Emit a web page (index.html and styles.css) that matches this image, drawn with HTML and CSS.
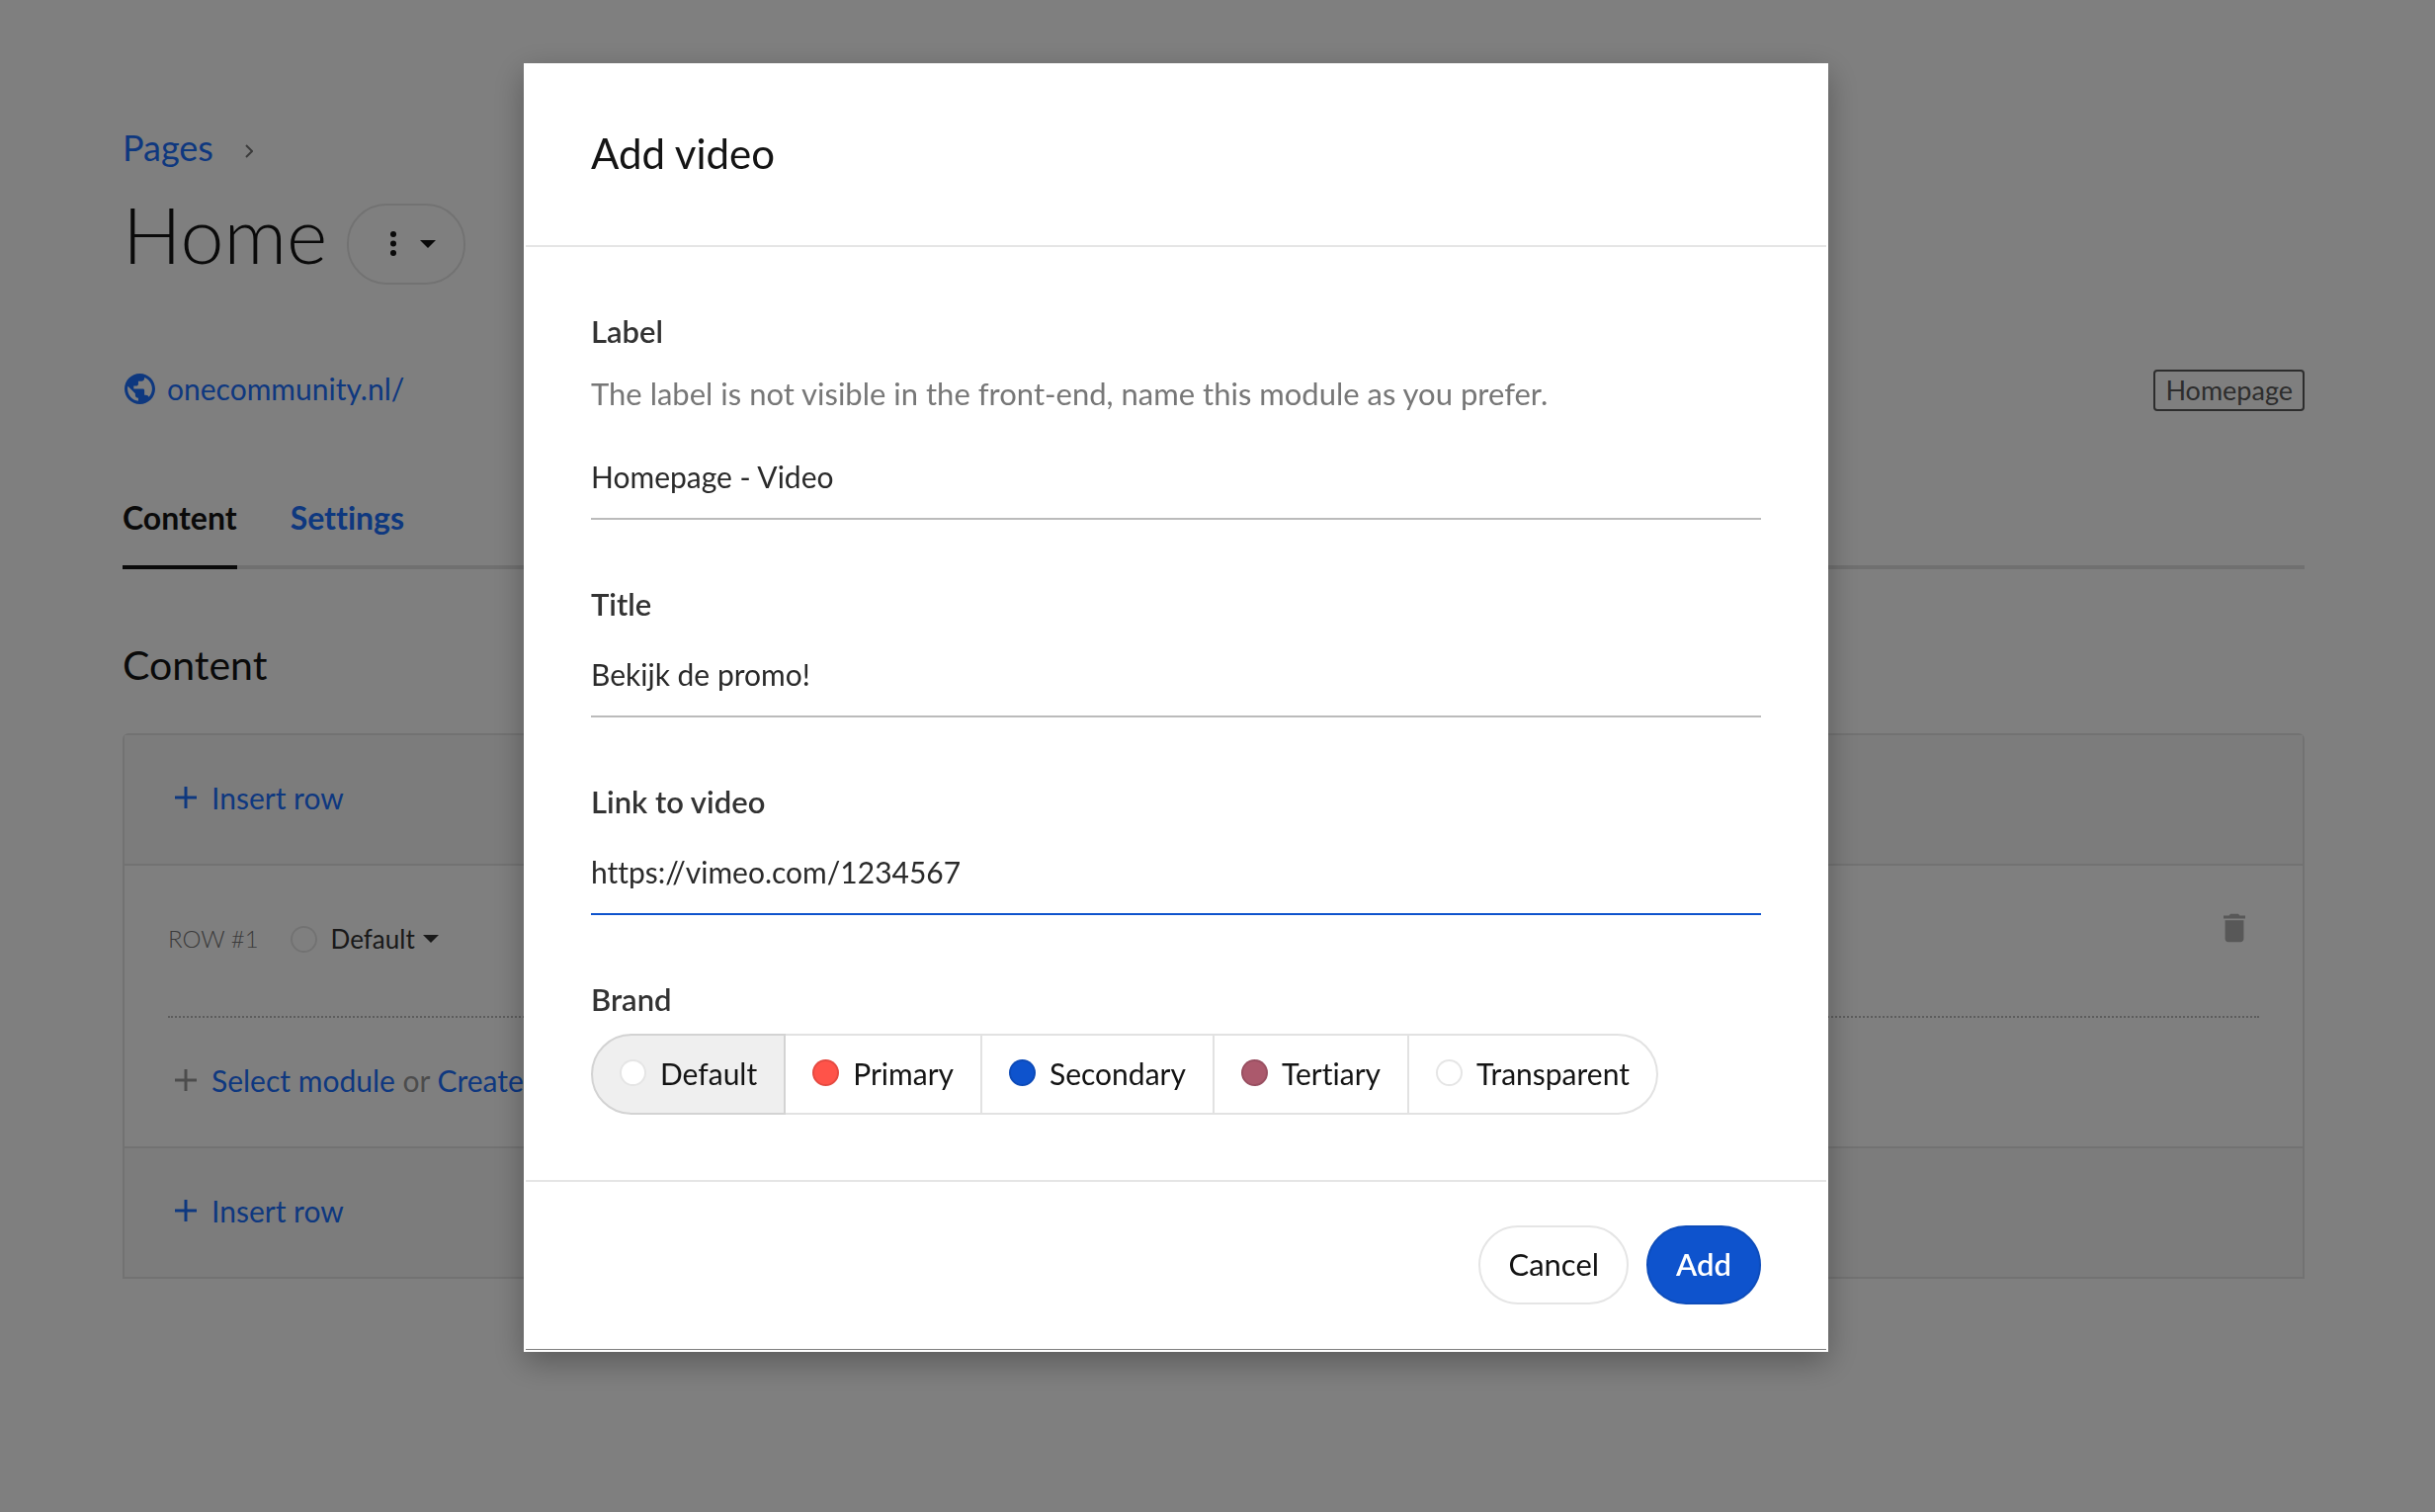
FILE: index.html
```html
<!DOCTYPE html>
<html lang="en">
  <head>
    <meta charset="UTF-8" />
    <meta name="viewport" content="width=device-width, initial-scale=1.0" />
    <title>Home - Add video</title>
    <link rel="stylesheet" href="styles.css">
  </head>
  <body>
    <main class="page">
      <nav class="breadcrumb">
        <a href="#">Pages</a>
        <svg class="chevron" viewBox="0 0 8 14"><path d="M1 1l6 6-6 6" /></svg>
      </nav>

      <div class="page-title">
        <h1>Home</h1>
        <button class="btn btn-menu" type="button" aria-label="Page actions">
          <svg class="dots" viewBox="0 0 6 26">
            <circle cx="3" cy="3" r="3" />
            <circle cx="3" cy="12.500" r="3" />
            <circle cx="3" cy="22" r="3" />
          </svg>
          <span class="caret"></span>
        </button>
      </div>

      <div class="page-meta">
        <a class="page-url" href="#">
          <svg class="globe" viewBox="2 2 20 20"><path d="M12 2C6.48 2 2 6.48 2 12s4.48 10 10 10 10-4.48 10-10S17.52 2 12 2zm-1 17.93c-3.95-.49-7-3.85-7-7.93 0-.62.08-1.21.21-1.79L9 15v1c0 1.1.9 2 2 2v1.930zm6.900-2.540c-.26-.81-1-1.390-1.900-1.390h-1v-3c0-.55-.45-1-1-1H8v-2h2c.55 0 1-.45 1-1V7h2c1.100 0 2-.9 2-2v-.41c2.930 1.190 5 4.060 5 7.410 0 2.080-.8 3.970-2.100 5.390z" /></svg>
          onecommunity.nl/
        </a>
        <span class="badge">Homepage</span>
      </div>

      <nav class="tabs">
        <a class="tab active" href="#">Content</a>
        <a class="tab" href="#">Settings</a>
      </nav>

      <h2>Content</h2>
      <section class="panel">
        <div class="insert-row">
          <svg class="plus" viewBox="0 0 36 36"><path d="M7 18h22M18 7v22" /></svg>
          <a href="#">Insert row</a>
        </div>

        <div class="row">
          <div class="row-head">
            <div class="row-info">
              <span class="row-name">ROW #1</span>
              <button class="row-brand" type="button">
                <span class="swatch"></span>
                Default
                <span class="caret"></span>
              </button>
            </div>
            <button class="row-delete" type="button" aria-label="Delete row">
              <svg class="trash" viewBox="5 3 14 18"><path d="M6 19c0 1.1.9 2 2 2h8c1.1 0 2-.9 2-2V7H6v12zM19 4h-3.500l-1-1h-5l-1 1H5v2h14V4z" /></svg>
            </button>
          </div>
          <div class="row-add">
            <svg class="plus" viewBox="0 0 36 36"><path d="M7 18h22M18 7v22" /></svg>
            <span><a href="#">Select module</a> or <a href="#">Create</a></span>
          </div>
        </div>

        <div class="insert-row">
          <svg class="plus" viewBox="0 0 36 36"><path d="M7 18h22M18 7v22" /></svg>
          <a href="#">Insert row</a>
        </div>
      </section>
    </main>

    <div class="overlay">
      <form class="modal" role="dialog" aria-labelledby="modal-title">
        <header class="modal-header">
          <h3 id="modal-title">Add video</h3>
        </header>

        <div class="modal-body">
          <div class="field">
            <label class="field-label" for="label">Label</label>
            <p class="field-help">The label is not visible in the front-end, name this module as you prefer.</p>
            <input class="field-input" type="text" id="label" value="Homepage - Video" />
          </div>
          <div class="field">
            <label class="field-label" for="title">Title</label>
            <input class="field-input" type="text" id="title" value="Bekijk de promo!" />
          </div>
          <div class="field">
            <label class="field-label" for="link">Link to video</label>
            <input class="field-input current" type="text" id="link" value="https://vimeo.com/1234567" />
          </div>
          <fieldset class="field">
            <legend class="field-label">Brand</legend>
            <div class="brands">
              <label class="brand"><input class="swatch" type="radio" name="brand" checked />Default</label>
              <label class="brand"><input class="swatch primary" type="radio" name="brand" />Primary</label>
              <label class="brand"><input class="swatch secondary" type="radio" name="brand" />Secondary</label>
              <label class="brand"><input class="swatch tertiary" type="radio" name="brand" />Tertiary</label>
              <label class="brand"><input class="swatch" type="radio" name="brand" />Transparent</label>
            </div>
          </fieldset>
        </div>

        <footer class="modal-footer">
          <button class="btn" type="button">Cancel</button>
          <button class="btn btn-primary" type="button">Add</button>
        </footer>
      </form>
    </div>
  </body>
</html>
```

FILE: styles.css
```css
* {
  box-sizing: border-box;
}

body {
  margin: 0;
  font-family: Lato, "Open Sans", sans-serif;
  font-size: 30px;
  font-variant-ligatures: none;
  line-height: 40px;
  color: #141414;
  background-color: #fff;
}

h1,
h2,
h3,
p {
  margin: 0;
  font-weight: 400;
}

a {
  color: #1c70ff;
  text-decoration: none;
}

button,
input {
  font: inherit;
  font-variant-ligatures: none;
  color: inherit;
}

svg {
  flex: none;
  fill: currentColor;
}

/* Page */

.page {
  padding: 127px 132px 0 124px;
}

.breadcrumb {
  display: flex;
  align-items: center;
  gap: 32px;
  font-size: 36px;
  line-height: 44px;
}

.chevron {
  width: 8px;
  height: 14px;
  margin-top: 8px;
  fill: none;
  stroke: #777;
  stroke-width: 2;
}

.page-title {
  display: flex;
  align-items: flex-start;
  gap: 20px;
  margin-top: 35px;
}

.page-title h1 {
  font-size: 79px;
  font-weight: 300;
  line-height: 62px;
}

.btn {
  display: flex;
  align-items: center;
  justify-content: center;
  height: 80px;
  padding: 0 28px 2px;
  border: 2px solid #e5e5e5;
  border-radius: 40px;
  font-size: 31px;
  background-color: #fff;
}

.btn-menu {
  gap: 24px;
  height: 82px;
  padding: 0 28px 0 42px;
}

.dots {
  width: 6px;
  height: 26px;
}

.caret {
  border: 8px solid transparent;
  border-top-color: currentColor;
  border-bottom: 0;
}

.page-meta {
  display: flex;
  align-items: flex-start;
  justify-content: space-between;
  margin-top: 86px;
}

.page-url {
  display: flex;
  align-items: center;
  gap: 12px;
  padding-left: 2px;
  line-height: 38px;
}

.globe {
  width: 31px;
  height: 31px;
}

.badge {
  padding: 1px 10px;
  border: 2px solid #5a5a5a;
  border-radius: 4px;
  font-size: 27px;
  line-height: 36px;
  color: #5a5a5a;
}

.tabs {
  display: flex;
  gap: 54px;
  margin-top: 88px;
  font-size: 32px;
  font-weight: 700;
  box-shadow: inset 0 -4px #e0e0e0;
}

.tab {
  padding-bottom: 28px;
  border-bottom: 4px solid transparent;
}

.tab.active {
  color: #141414;
  border-color: #141414;
}

.page h2 {
  margin: 73px 0 45px;
  font-size: 41px;
  line-height: 48px;
}

.panel {
  border: 2px solid #e5e5e5;
  border-radius: 6px 6px 0 0;
}

.insert-row {
  display: flex;
  align-items: center;
  gap: 8px;
  padding: 43px 44px 47px;
  color: #1c70ff;
  background-color: #f9f9f9;
}

.plus {
  width: 36px;
  height: 36px;
  stroke: currentColor;
  stroke-width: 3;
}

.row {
  padding: 48px 44px 47px;
  border: solid #e5e5e5;
  border-width: 2px 0;
}

.row-head {
  display: flex;
  align-items: flex-start;
  justify-content: space-between;
  padding-bottom: 60px;
  border-bottom: 2px dotted #bbb;
}

.row-info {
  display: flex;
  gap: 32px;
  padding-top: 8px;
  font-size: 26px;
  line-height: 36px;
}

.row-name {
  font-size: 24px;
  font-weight: 300;
  color: #777;
}

.row-brand,
.row-delete {
  display: flex;
  align-items: center;
  padding: 0;
  border: 0;
  background: none;
}

.row-brand {
  gap: 8px;
  color: #333;
}

.row-brand .swatch {
  margin-right: 6px;
}

.row-delete {
  padding: 0 14px;
  color: #b0b0b0;
}

.trash {
  width: 22px;
  height: 30px;
}

.row-add {
  display: flex;
  align-items: center;
  gap: 8px;
  padding-top: 43px;
  color: #999;
}

/* Modal */

.overlay {
  position: fixed;
  inset: 0;
  padding: 64px 84px 64px 0;
  overflow: auto;
  background-color: rgba(0, 0, 0, 0.5);
}

.modal {
  max-width: 1320px;
  margin: 0 auto;
  border: 2px solid #fff;
  background-color: #fff;
  box-shadow: 0 10px 30px rgba(0, 0, 0, 0.3);
}

.modal-header {
  padding: 65px 66px 69px;
  border-bottom: 2px solid #e5e5e5;
}

.modal-header h3 {
  font-size: 42px;
  line-height: 48px;
}

.modal-body {
  display: grid;
  gap: 64px;
  padding: 64px 66px 66px;
}

.field {
  min-width: 0;
  margin: 0;
  padding: 0;
  border: 0;
}

.field-label {
  display: block;
  padding: 0;
  font-size: 31px;
  font-weight: 600;
  line-height: 42px;
  color: #333;
}

.field-help {
  margin: 22px 0 28px;
  font-size: 31px;
  color: #777;
}

.field-input {
  display: block;
  width: 100%;
  height: 80px;
  padding: 16px 0 22px;
  border: 0;
  border-bottom: 2px solid #bbb;
  outline: 0;
  color: #2a2a2a;
  background: none;
}

.field-label + .field-input,
.brands {
  margin-top: 14px;
}

.field-input.current {
  border-color: #0e53cd;
}

.brands {
  display: flex;
}

.brand {
  display: flex;
  align-items: center;
  gap: 14px;
  height: 82px;
  padding: 0 27px 3px;
  border: 2px solid #e2e2e2;
  border-left-width: 0;
}

.brand:first-child {
  border-left-width: 2px;
  border-radius: 41px 0 0 41px;
}

.brand:last-child {
  border-radius: 0 41px 41px 0;
}

.brand:has(:checked) {
  border-color: #d3d3d3;
  background-color: #efefef;
}

.swatch {
  flex: none;
  appearance: none;
  width: 27px;
  height: 27px;
  margin: 0;
  border: 2px solid rgba(0, 0, 0, 0.1);
  border-radius: 50%;
  background-color: #fff;
}

.swatch.primary {
  background-color: #ff5349;
}

.swatch.secondary {
  background-color: #0e53cd;
}

.swatch.tertiary {
  background-color: #ab596c;
}

.modal-footer {
  display: flex;
  justify-content: flex-end;
  gap: 18px;
  padding: 44px 66px 45px;
  border-top: 2px solid #e5e5e5;
  border-bottom: 1px solid #808080;
}

.btn-primary {
  border-color: #0e4dbb;
  font-weight: 600;
  color: #fff;
  background-color: #0e53cd;
}
```
